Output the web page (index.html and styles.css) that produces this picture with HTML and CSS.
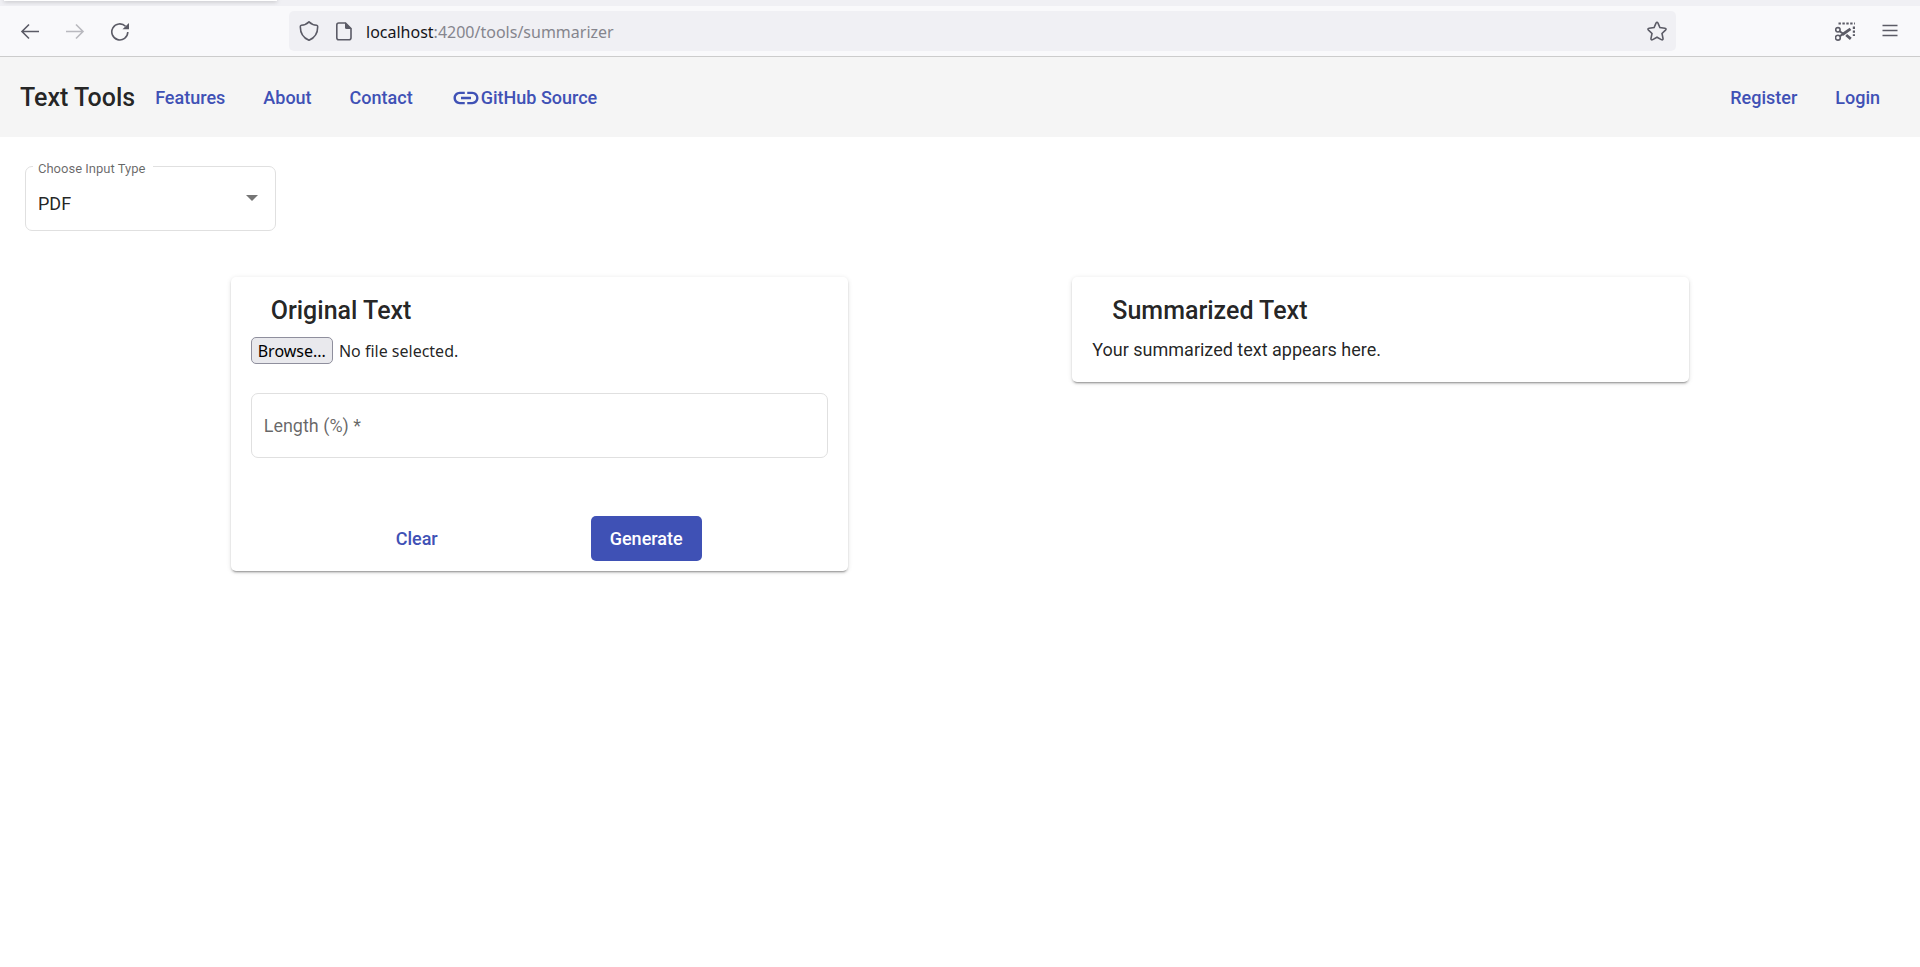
FILE: index.html
```html
<!DOCTYPE html>
<html lang="en">
<head>
<meta charset="utf-8">
<meta name="viewport" content="width=device-width, initial-scale=1">
<title>Text Tools</title>
<link rel="stylesheet" href="styles.css">
</head>
<body>
<div class="tab-strip"><div class="active-tab"></div></div>
<div class="browser-bar">
  <div class="bar-group">
    <button class="bar-button" type="button" aria-label="Back">
      <svg viewBox="0 0 20 20"><path d="M19 10.500H2M9 3.500L2 10.500L9 17.500"/></svg>
    </button>
    <button class="bar-button disabled" type="button" aria-label="Forward" disabled>
      <svg viewBox="0 0 20 20"><path d="M1 10.500H18M11 3.500L18 10.500L11 17.500"/></svg>
    </button>
    <button class="bar-button" type="button" aria-label="Reload">
      <svg viewBox="0 0 20 20"><path d="M17.800 11A8 8 0 1 1 15.500 5.300"/><path class="solid" d="M19 2V8.300H12.500Z"/></svg>
    </button>
  </div>
  <div class="url-bar">
    <button class="bar-button" type="button" aria-label="Tracking protection">
      <svg viewBox="0 0 20 20"><path d="M10 .9C8 3 4.500 4.200 2.300 4.300C1.600 4.400 1.300 4.900 1.300 5.700C1.300 12.200 4.500 16.900 10 19.300C15.500 16.900 18.700 12.200 18.700 5.700C18.700 4.900 18.400 4.400 17.700 4.300C15.500 4.200 12 3 10 .9Z"/></svg>
    </button>
    <button class="bar-button" type="button" aria-label="Site information">
      <svg viewBox="0 0 20 20"><path d="M4.800 2H11.500L17 7.500V16.700A2 2 0 0 1 15 18.700H4.800A2 2 0 0 1 2.800 16.700V4A2 2 0 0 1 4.800 2Z"/><path class="solid" d="M11 1.500L17.500 8H12.500A1.500 1.500 0 0 1 11 6.500Z"/></svg>
    </button>
    <p class="url"><span class="host">localhost</span>:4200/tools/summarizer</p>
    <button class="bar-button" type="button" aria-label="Bookmark this page">
      <svg viewBox="0 0 20 20"><path d="M9 2.200Q10 .4 11 2.200L12.900 6.500L17.900 7.200Q19.900 7.600 18.500 9.100L15 12.500L16 17.300Q16.200 19.500 14.300 18.600L10 16.200L5.700 18.600Q3.800 19.500 4 17.300L5 12.500L1.500 9.100Q.1 7.600 2.100 7.200L7.100 6.500Z"/></svg>
    </button>
  </div>
  <div class="bar-group">
    <button class="bar-button" type="button" aria-label="Take screenshot">
      <svg viewBox="0 0 20 20"><path d="M3.500 2.500H20" stroke-width="2.200" stroke-dasharray="2.400 1.500"/><path d="M18.900 5.500V15" stroke-width="2.200" stroke-dasharray="2.400 1.500"/><circle cx="2.900" cy="8.800" r="2.200"/><circle cx="2.900" cy="16.700" r="2.400"/><path d="M4.600 10.200L8.500 13M4.800 15.200L8.500 12.800" stroke-width="2"/><path d="M7.500 13.500L15.500 7.800M11.200 14L15.800 17.800" stroke-width="2.800"/></svg>
    </button>
    <button class="bar-button" type="button" aria-label="Open application menu">
      <svg viewBox="0 0 20 20"><path d="M2.500 4.500H17.500M2.500 9.500H17.500M2.500 14.500H17.500"/></svg>
    </button>
  </div>
</div>

<header class="app-header">
  <h1 class="brand">Text Tools</h1>
  <nav class="nav-links">
    <a href="#">Features</a>
    <a href="#">About</a>
    <a href="#">Contact</a>
    <a href="#"><svg class="link-icon" viewBox="0 0 30 30"><path d="M4.900 15c0-2.140 1.740-3.880 3.880-3.880h5V8.750h-5C5.320 8.750 2.500 11.550 2.500 15s2.800 6.250 6.250 6.250h5v-2.370h-5C6.640 18.880 4.900 17.140 4.900 15zM10 16.250h10v-2.500H10v2.500zM21.250 8.750h-5v2.370h5c2.140 0 3.880 1.740 3.880 3.880s-1.740 3.880-3.880 3.880h-5v2.370h5c3.450 0 6.250-2.800 6.250-6.250s-2.800-6.250-6.250-6.250z"/></svg>GitHub Source</a>
  </nav>
  <nav class="nav-links account">
    <a href="#">Register</a>
    <a href="#">Login</a>
  </nav>
</header>

<main>
  <div class="field type-field">
    <label class="floating" for="input-type">Choose Input Type</label>
    <select id="input-type"><option>PDF</option><option>Text</option></select>
    <svg class="arrow" viewBox="0 0 12 6"><path d="M0 0H12L6 6Z"/></svg>
  </div>

  <div class="cards">
    <form class="card">
      <h2>Original Text</h2>
      <div class="file-row">
        <input class="file-input" id="file" type="file" accept="application/pdf">
        <label class="browse" for="file">Browse...</label>
        <span>No file selected.</span>
      </div>
      <div class="field length-field">
        <label class="resting" for="length">Length (%) *</label>
        <input id="length" type="text" inputmode="numeric" required>
      </div>
      <div class="actions">
        <button class="action" type="reset">Clear</button>
        <button class="action primary" type="submit">Generate</button>
      </div>
    </form>
    <section class="card">
      <h2>Summarized Text</h2>
      <p class="result">Your summarized text appears here.</p>
    </section>
  </div>
</main>
</body>
</html>
```

FILE: styles.css
```css
* { box-sizing: border-box; }

body {
  margin: 0;
  background: #fff;
  color: rgba(0, 0, 0, .87);
  font: 400 18px/24px Roboto, "Liberation Sans", sans-serif;
}

h1, h2, p { margin: 0; }
button, input, select { font: inherit; }

.tab-strip {
  height: 6px;
  overflow: hidden;
  background: #f0f0f4;
}

.active-tab {
  width: 273px;
  height: 1px;
  margin-left: 4px;
  background: #fff;
  box-shadow: 0 0 4px rgba(0, 0, 0, .6);
}

.browser-bar {
  display: flex;
  align-items: center;
  height: 51px;
  padding: 0 20px;
  background: #f9f9fb;
  border-bottom: 1px solid #ccc;
}

.bar-group { display: flex; gap: 25px; }

.bar-button {
  display: block;
  flex: none;
  padding: 0;
  border: 0;
  background: none;
}

.bar-button svg {
  display: block;
  width: 20px;
  height: 20px;
  fill: none;
  stroke: #5b5b66;
  stroke-width: 1.6;
}

.bar-button .solid { fill: #5b5b66; stroke: none; }
.disabled { opacity: .4; }

.url-bar {
  display: flex;
  flex: 1;
  align-items: center;
  gap: 15px;
  height: 40px;
  margin: 0 159px;
  padding: 0 9px 0 10px;
  border-radius: 5px;
  background: #f0f0f4;
}

.url {
  flex: 1;
  margin-left: -3px;
  padding-top: 2px;
  color: #85858d;
  font: 16px/24px "Noto Sans", sans-serif;
}

.host { color: #15141a; }

.app-header {
  display: flex;
  align-items: center;
  height: 80px;
  padding: 2px 20px 0;
  background: #f5f5f5;
}

.brand, .card h2 {
  font-size: 25px;
  line-height: 40px;
  font-weight: 500;
}

.nav-links {
  display: flex;
  gap: 38px;
  padding: 0 20px;
}

.account { margin-left: auto; }

.nav-links a {
  display: flex;
  align-items: center;
  color: #3f51b5;
  font-weight: 500;
  text-decoration: none;
}

.link-icon {
  width: 30px;
  height: 30px;
  fill: #3f51b5;
}

main { padding: 29px 25px; }

.field { position: relative; }

.field select, .field input {
  display: block;
  width: 100%;
  height: 65px;
  padding: 12px;
  border: 1px solid #e0e0e0;
  border-radius: 7px;
  background: #fff;
  color: rgba(0, 0, 0, .87);
}

.field select {
  appearance: none;
  padding-top: 22px;
}

.type-field { width: 251px; }

.floating {
  position: absolute;
  top: -5px;
  left: 8px;
  padding: 0 8px 0 5px;
  background: #fff;
  color: rgba(0, 0, 0, .6);
  font-size: 13px;
  line-height: 16px;
}

.arrow {
  position: absolute;
  top: 29px;
  right: 18px;
  width: 12px;
  height: 6px;
  fill: #757575;
  pointer-events: none;
}

.cards {
  display: flex;
  justify-content: space-between;
  align-items: flex-start;
  padding: 46px 11% 0;
}

.card {
  width: 42.3%;
  padding: 14px 20px 20px;
  border-radius: 5px;
  background: #fff;
  box-shadow: 0 3px 1px -2px rgba(0, 0, 0, .2), 0 2px 2px rgba(0, 0, 0, .14), 0 1px 5px rgba(0, 0, 0, .12);
}

.card h2 { padding-left: 20px; }

.file-row {
  display: flex;
  align-items: center;
  gap: 6px;
  margin-top: 6px;
  font: 16px/24px "Noto Sans", sans-serif;
}

.file-input {
  position: absolute;
  width: 1px;
  height: 1px;
  opacity: 0;
}

.browse {
  padding: 1px 6px 0;
  border: 1px solid #8f8f9d;
  border-radius: 5px;
  background: #e9e9ed;
  color: #000;
  line-height: 24px;
}

.length-field { margin-top: 29px; }

.resting {
  position: absolute;
  top: 21px;
  left: 13px;
  color: rgba(0, 0, 0, .6);
}

.actions {
  display: flex;
  justify-content: center;
  gap: 134px;
  margin: 58px 0 -10px;
}

.action {
  min-width: 80px;
  height: 45px;
  padding: 0 19px;
  border: 0;
  border-radius: 5px;
  background: none;
  color: #3f51b5;
  font-weight: 500;
}

.primary { background: #3f51b5; color: #fff; }

.result { margin: 7px 0 0; }
```
